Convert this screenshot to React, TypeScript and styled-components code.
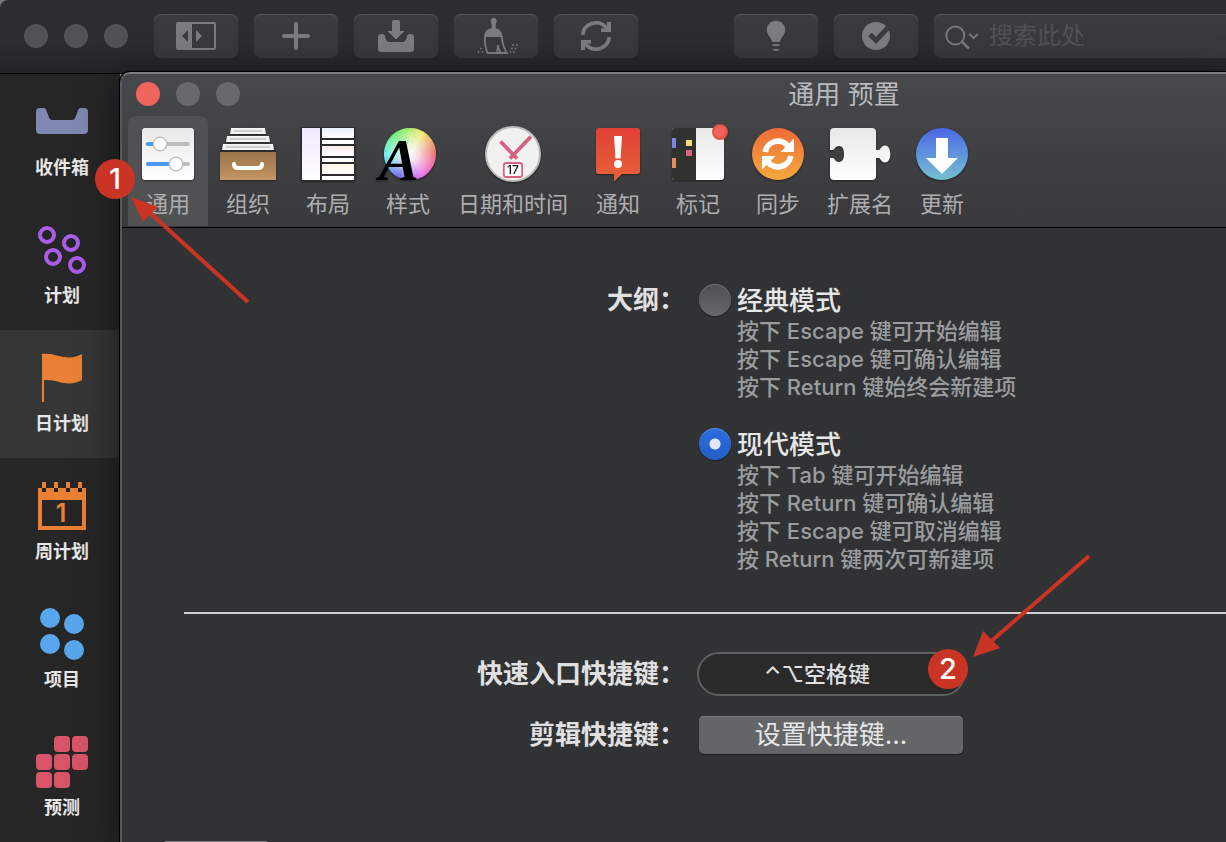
import React from "react";
import styled, { createGlobalStyle, css } from "styled-components";

const GlobalStyle = createGlobalStyle`
  * { box-sizing: border-box; }
  html, body { margin: 0; background: #262626; }
  body, button, input {
    font-family: Inter, "Noto Sans CJK SC", sans-serif;
  }
  button { border: 0; padding: 0; background: none; color: inherit; }
`;

const Page = styled.div`
  position: relative;
  display: flex;
  flex-direction: column;
  height: 100vh;
  overflow: hidden;
  background: #77787a;
`;

/* ---------- main window toolbar ---------- */

const Toolbar = styled.header`
  display: flex;
  align-items: center;
  flex: none;
  height: 74px;
  padding: 0 0 2px 24px;
  gap: 16px;
  background: linear-gradient(#2d2e32 0, #2c2d31 40px, #232427 73px);
  border-bottom: 1px solid #000;
  border-top-left-radius: 8px;
`;

const Lights = styled.div`
  display: flex;
  flex: none;
  gap: 16px;
`;

const Light = styled.button<{ $color: string }>`
  width: 24px;
  height: 24px;
  border-radius: 50%;
  background: ${(p) => p.$color};
`;

const ButtonGroup = styled.div<{ $before: number }>`
  display: flex;
  flex: none;
  gap: 16px;
  margin-left: ${(p) => p.$before}px;
`;

const raised = css`
  background: linear-gradient(#3a3b3e, #37383a);
  box-shadow: inset 0 1px 0 #55565a;
`;

const ToolButton = styled.button`
  ${raised}
  width: 84px;
  height: 44px;
  border-radius: 7px;
  color: #7c7c7e;
  svg { display: block; }
`;

const SearchBox = styled.label`
  ${raised}
  display: flex;
  flex: 1;
  min-width: 0;
  height: 44px;
  border-radius: 7px 0 0 7px;
  color: #77787a;
  svg { flex: none; }
`;

const SearchInput = styled.input`
  flex: 1;
  min-width: 0;
  border: 0;
  padding: 0;
  outline: 0;
  background: transparent;
  color: #9a9a9c;
  font-size: 24px;
  &::placeholder { color: #515156; opacity: 1; }
`;

/* ---------- body ---------- */

const Body = styled.div`
  display: flex;
  flex: 1;
  min-height: 0;
`;

const Sidebar = styled.nav`
  flex: none;
  width: 120px;
  background: #262626;
`;

const SideItem = styled.a<{ $active?: boolean }>`
  display: flex;
  flex-direction: column;
  align-items: center;
  height: 128px;
  padding: 20px 0 0 4px;
  background: ${(p) => (p.$active ? "#363636" : "transparent")};
  color: #e6e6e6;
  font-size: 18px;
  font-weight: 700;
  line-height: 28px;
  text-decoration: none;
  svg { flex: none; }
`;

const Preferences = styled.section`
  position: relative;
  flex: 1;
  min-width: 0;
  margin-top: -2px;
  border-top: 2px solid #7c7d7f;
  border-left: 2px solid #58595b;
  border-top-left-radius: 10px;
  background: #313234;
  box-shadow: 0 0 0 1px #000, 0 10px 40px rgba(0, 0, 0, 0.55);
`;

const PrefHeader = styled.div`
  height: 154px;
  background: linear-gradient(#47484b, #39393b);
  border-bottom: 1px solid #000;
  border-top-left-radius: 8px;
`;

const TitleBar = styled.div`
  display: flex;
  align-items: center;
  height: 42px;
  padding: 0 0 2px 14px;
`;

const Title = styled.h1`
  flex: 1;
  margin: 0;
  padding: 2px 0 0 222px;
  color: #b9babd;
  font-size: 26px;
  font-weight: 400;
  line-height: 36px;
  text-align: center;
`;

const Tabs = styled.div`
  display: flex;
  padding-left: 6px;
`;

const Tab = styled.button<{ $width: number; $active?: boolean }>`
  display: flex;
  flex: none;
  flex-direction: column;
  align-items: center;
  width: ${(p) => p.$width}px;
  height: 110px;
  padding-top: 8px;
  border-radius: 8px 8px 0 0;
  background: ${(p) => (p.$active ? "#505153" : "transparent")};
  color: #adaeb0;
  font-size: 22px;
  line-height: 32px;
  white-space: nowrap;
  svg {
    flex: none;
    overflow: visible;
    margin-bottom: 4px;
    filter: drop-shadow(0 1px 1px rgba(0, 0, 0, 0.45));
  }
`;

/* ---------- preference form ---------- */

const Form = styled.form`
  padding-top: 54px;
`;

const Row = styled.div<{ $gap: number }>`
  display: grid;
  grid-template-columns: 563px 1fr;
  column-gap: 12px;
  margin-bottom: ${(p) => p.$gap}px;
`;

const RowLabel = styled.label<{ $height: number }>`
  color: #e0e0e0;
  font-size: 26px;
  font-weight: 700;
  line-height: ${(p) => p.$height}px;
  text-align: right;
`;

const Option = styled.div`
  display: grid;
  grid-template-columns: 32px 1fr;
  column-gap: 6px;
  margin: 2px 0 27px 2px;
`;

const Radio = styled.input`
  appearance: none;
  width: 32px;
  height: 32px;
  margin: 0;
  border-radius: 50%;
  background: linear-gradient(#4e4f50, #68696a);
  box-shadow: inset 0 1px 0 #707172, 0 1px 1px rgba(0, 0, 0, 0.4);
  &:checked {
    background: radial-gradient(circle, #dfe9fa 5px, transparent 6px),
      linear-gradient(#2c6ddf, #265dc6);
    box-shadow: inset 0 1px 0 #5d8fe6, 0 1px 1px rgba(0, 0, 0, 0.4);
  }
`;

const OptionName = styled.label`
  color: #e6e6e6;
  font-size: 26px;
  font-weight: 500;
  line-height: 33px;
`;

const Hints = styled.p`
  grid-column: 2;
  margin: 0;
  color: #9b9c9d;
  font-size: 22px;
  font-weight: 500;
  line-height: 28px;
`;

const Divider = styled.hr`
  height: 2px;
  margin: 0 0 38px 62px;
  border: 0;
  background: #d0d1d0;
`;

const ShortcutField = styled.input`
  width: 268px;
  height: 44px;
  padding: 0 28px 4px 0;
  border: 2px solid #5e5f60;
  border-radius: 22px;
  outline: 0;
  background: #2a2a2a;
  color: #e0e0e0;
  font-family: Inter, "Noto Sans CJK SC", "DejaVu Sans", sans-serif;
  font-size: 22px;
  font-weight: 500;
  text-align: center;
`;

const PushButton = styled.button`
  width: 264px;
  height: 38px;
  margin-left: 2px;
  border-radius: 5px;
  background: #646567;
  box-shadow: inset 0 1px 0 #7d7e80, 0 1px 1px rgba(0, 0, 0, 0.5);
  color: #e6e6e6;
  font-size: 26px;
  line-height: 36px;
`;

const FooterButton = styled(PushButton)`
  width: 108px;
  margin: 87px 0 0 40px;
`;

/* ---------- annotations lying over the windows ---------- */

const Badge = styled.span<{ $x: number; $y: number }>`
  position: absolute;
  left: ${(p) => p.$x}px;
  top: ${(p) => p.$y}px;
  width: 40px;
  height: 40px;
  border-radius: 50%;
  background: #ca3424;
  color: #fff;
  font-family: Inter, sans-serif;
  font-size: 29px;
  font-weight: 500;
  line-height: 40px;
  text-align: center;
`;

const ArrowLayer = styled.svg`
  position: absolute;
  left: 0;
  top: 0;
  pointer-events: none;
`;

/* ---------- toolbar icons ---------- */

const ToolSvg = ({ children }: { children: React.ReactNode }) => (
  <svg width="84" height="44" viewBox="0 0 84 44" fill="none" aria-hidden="true">
    {children}
  </svg>
);

const SidebarIcon = () => (
  <ToolSvg>
    <rect x="23" y="9" width="38" height="26" rx="1" stroke="currentColor" strokeWidth="2" />
    <path d="M23 9h15v26H23z" fill="currentColor" />
    <path d="M28 22l6-6v12z" fill="#3a3b3d" />
    <path d="M48 22l-6-6v12z" fill="currentColor" />
  </ToolSvg>
);

const PlusIcon = () => (
  <ToolSvg>
    <path d="M30 22h24M42 10v24" stroke="currentColor" strokeWidth="4" strokeLinecap="round" />
  </ToolSvg>
);

const DownloadIcon = () => (
  <ToolSvg>
    <path
      d="M24 23q0-3 3-3h2q1.500 0 2 2l1 3.500q.8 2.500 3.500 2.500h13q2.700 0 3.500-2.500l1-3.500q.5-2 2-2h2q3 0 3 3v12q0 3-3 3H27q-3 0-3-3z"
      fill="currentColor"
    />
    <path d="M38 8q0-2 2-2h4q2 0 2 2v9h4.500L42 25.500 33.500 17H38z" fill="currentColor" />
  </ToolSvg>
);

const BroomIcon = () => (
  <ToolSvg>
    <path d="M36.700 7a3 3 0 0 1 6 0l-1 4v4h-4v-4z" fill="currentColor" />
    <path d="M30 23c0-5 3.500-9 9.500-9s9 4 9 9z" fill="currentColor" />
    <path
      d="M30.800 23c0 6 .5 11 2.700 16H53c-3-4-4.500-9-5.200-16M44 31l-1 8M44 31c.4 3 1.200 6 3 8"
      stroke="currentColor"
      strokeWidth="1.800"
    />
    <g fill="currentColor">
      {[[24.500, 38], [28.500, 38], [27, 34.500], [56.500, 38], [60, 38], [58, 34.500], [59, 31], [63, 31], [61.500, 34.500]].map(
        ([x, y]) => <circle key={`${x}-${y}`} cx={x} cy={y} r="0.900" />
      )}
    </g>
  </ToolSvg>
);

const RefreshIcon = () => (
  <ToolSvg>
    {[0, 180].map((angle) => (
      <g key={angle} transform={`rotate(${angle} 42 22)`}>
        <path d="M28.700 21A13.300 13.300 0 0 1 52 13.500" stroke="currentColor" strokeWidth="3.600" />
        <path d="M53 8h4v10H47v-3.500h3l3-2z" fill="currentColor" />
      </g>
    ))}
  </ToolSvg>
);

const BulbIcon = () => (
  <ToolSvg>
    <path
      d="M42 6.700c-5.200 0-9.200 4-9.200 9.100 0 4.200 2.400 6 4 8.700.9 1.500.7 3.500 2.200 3.500h6c1.500 0 1.300-2 2.200-3.500 1.600-2.700 4-4.500 4-8.700 0-5.100-4-9.100-9.200-9.100z"
      fill="currentColor"
    />
    <path d="M38.500 35h7q-1 2-3.500 2t-3.500-2" fill="currentColor" />
    <path d="M38.500 31h7" stroke="currentColor" strokeWidth="1.800" />
  </ToolSvg>
);

const CheckIcon = () => (
  <ToolSvg>
    <circle cx="42" cy="22" r="14" fill="currentColor" />
    <path d="M36 20.500l6 6L58 9.500" stroke="#3a3b3d" strokeWidth="5" />
  </ToolSvg>
);

const SearchIcon = () => (
  <svg width="55" height="44" viewBox="0 0 55 44" fill="none" stroke="currentColor" aria-hidden="true">
    <circle cx="21.300" cy="21.500" r="9" strokeWidth="2" />
    <path d="M28 28l7 6.500" strokeWidth="2.400" />
    <path d="M35.300 20l4.300 4 4.400-4" strokeWidth="2" />
  </svg>
);

/* ---------- sidebar and tab icons share a 60px canvas ---------- */

const Icon60 = ({ children }: { children: React.ReactNode }) => (
  <svg width="60" height="60" viewBox="0 0 60 60" fill="none" aria-hidden="true">
    {children}
  </svg>
);

const InboxIcon = () => (
  <Icon60>
    <path
      d="M8 14h4q1.500 0 2 1.500l3 8q1 2.500 3 2.500h20q2.500 0 3.300-2.500l3-8q.5-1.500 2-1.500H52q4 0 4 4v18q0 4-4 4H8q-4 0-4-4V18q0-4 4-4z"
      fill="#7f87b2"
    />
  </Icon60>
);

const PlanIcon = () => (
  <Icon60>
    <g stroke="#ab5ceb" strokeWidth="4">
      <circle cx="15" cy="13" r="7" />
      <circle cx="39" cy="21" r="7" />
      <circle cx="21" cy="35" r="7" />
      <circle cx="45" cy="43" r="7" />
    </g>
  </Icon60>
);

const FlagIcon = () => (
  <Icon60>
    <path d="M10 4c10-1.500 18 3.500 27 3.500 5 0 9-1.500 13-3.500v26c-4 2-8 3.500-13 3.500-8 0-16-4.500-25-3.300V52h-2z" fill="#e98033" />
  </Icon60>
);

const CalendarIcon = () => (
  <Icon60>
    <path d="M6 10h48v42H6zM10 22v26h40V22z" fill="#e98033" fillRule="evenodd" />
    {[10, 22, 34, 46].map((x) => (
      <g key={x}>
        <path d={`M${x} 4h4v6h-4z`} fill="#e98033" />
        <path d={`M${x} 10h4v4h-4z`} fill="#242424" />
      </g>
    ))}
    <text x="29" y="44" textAnchor="middle" fontFamily="Inter" fontSize="25" fontWeight="600" fill="#e98033">
      1
    </text>
  </Icon60>
);

const ProjectsIcon = () => (
  <Icon60>
    <g fill="#58a7ee">
      <circle cx="18" cy="12" r="10" />
      <circle cx="42" cy="18" r="10" />
      <circle cx="18" cy="38" r="10" />
      <circle cx="42" cy="44" r="10" />
    </g>
  </Icon60>
);

const ForecastIcon = () => (
  <Icon60>
    {[[22, 2], [40, 2], [4, 20], [22, 20], [40, 20], [4, 38], [22, 38]].map(([x, y]) => (
      <rect key={`${x}-${y}`} x={x} y={y} width="16" height="16" rx="4" fill="#d85468" />
    ))}
  </Icon60>
);

const Gradient = ({ id, from, to }: { id: string; from: string; to: string }) => (
  <linearGradient id={id} x1="0" y1="0" x2="0" y2="1">
    <stop offset="0" stopColor={from} />
    <stop offset="1" stopColor={to} />
  </linearGradient>
);

const GeneralIcon = () => (
  <Icon60>
    <Gradient id="paper" from="#e8e8e8" to="#ffffff" />
    <rect x="4" y="4" width="52" height="52" rx="3" fill="url(#paper)" />
    <g strokeWidth="4" strokeLinecap="round">
      <path d="M10 20h40M10 40h40" stroke="#bdbdbd" />
      <path d="M10 20h12M10 40h28" stroke="#4c98f3" />
    </g>
    <g fill="#fff" stroke="#bcbcbc" strokeWidth="1.200">
      <circle cx="22" cy="20" r="6.800" />
      <circle cx="38" cy="40" r="6.800" />
    </g>
  </Icon60>
);

const OrganizeIcon = () => (
  <Icon60>
    <Gradient id="drawer" from="#9a744b" to="#c49663" />
    <path d="M13 4h34l1 6H12zM9 12h42l1 6H8zM5 20h50l1 6H4z" fill="#f2f2f2" />
    <path d="M16 7h28M12 15h36M8 23h44" stroke="#cfcfcf" strokeWidth="2" />
    <path d="M2 26h56v2H2z" fill="#2b2b2c" />
    <path d="M2 28h56v28H2z" fill="url(#drawer)" />
    <path d="M16 40q0 4 4 4h20q4 0 4-4" stroke="#fff" strokeWidth="4" strokeLinecap="round" />
  </Icon60>
);

const LayoutIcon = () => (
  <Icon60>
    <Gradient id="lilac" from="#f1e9fd" to="#ffffff" />
    <Gradient id="blue" from="#e9effc" to="#ffffff" />
    <Gradient id="rose" from="#fbeaea" to="#ffffff" />
    <Gradient id="sand" from="#fcf8e4" to="#ffffff" />
    <path d="M3 3h54v54H3z" fill="#2b2b2d" />
    <path d="M4 4h18v52H4z" fill="url(#lilac)" />
    <path d="M24 4h32v10H24z" fill="url(#blue)" />
    <path d="M24 22h32v10H24z" fill="url(#rose)" />
    <path d="M24 40h32v10H24z" fill="url(#sand)" />
    <path d="M24 16h32v4H24zM24 34h32v4H24zM24 52h32v4H24z" fill="#fff" />
  </Icon60>
);

const wheelSlices = Array.from({ length: 60 }, (_, i) => {
  const point = (deg: number) => {
    const rad = (deg * Math.PI) / 180;
    return `${(32 + 26 * Math.cos(rad)).toFixed(2)} ${(30 - 26 * Math.sin(rad)).toFixed(2)}`;
  };
  const start = i * 6;
  return { hue: start, d: `M32 30L${point(start - 0.5)}A26 26 0 0 0 ${point(start + 6.5)}z` };
});

const StyleIcon = () => (
  <Icon60>
    <radialGradient id="wheel">
      <stop offset="0" stopColor="#fff" />
      <stop offset="0.3" stopColor="#fff" stopOpacity="0.8" />
      <stop offset="1" stopColor="#fff" stopOpacity="0" />
    </radialGradient>
    {wheelSlices.map((s) => (
      <path key={s.hue} d={s.d} fill={`hsl(${s.hue} 80% 68%)`} />
    ))}
    <circle cx="32" cy="30" r="26" fill="url(#wheel)" />
    <text x="1" y="56" fontFamily="Liberation Serif" fontSize="60" fontWeight="700" fontStyle="italic" fill="#000">
      A
    </text>
  </Icon60>
);

const DateIcon = () => (
  <Icon60>
    <circle cx="30" cy="30" r="27" fill="#f1f1f0" stroke="#bcbcba" strokeWidth="2" />
    <path d="M17.500 17.500L34 34.500M48 12.500L27 34.500" stroke="#d5627f" strokeWidth="3.800" />
    <rect x="20.800" y="39" width="18.400" height="14" rx="2.500" fill="#fff" stroke="#d5627f" strokeWidth="1.800" />
    <text x="30" y="50" textAnchor="middle" fontFamily="Inter" fontSize="12" fontWeight="500" fill="#111">
      17
    </text>
  </Icon60>
);

const NoticeIcon = () => (
  <Icon60>
    <Gradient id="notice" from="#e04036" to="#e86238" />
    <path d="M11 4h38q3 0 3 3v40q0 3-3 3H34l-8 7.500V50H11q-3 0-3-3V7q0-3 3-3z" fill="url(#notice)" />
    <path d="M26 12h8l-1.500 22.500h-5z" fill="#fff" />
    <circle cx="30" cy="40" r="4" fill="#fff" />
  </Icon60>
);

const BadgesIcon = () => (
  <Icon60>
    <rect x="4" y="4" width="52" height="52" rx="3" fill="url(#paper)" />
    <path d="M7 4h21v52H7q-3 0-3-3V7q0-3 3-3z" fill="#30322f" />
    <path d="M4 14h4v10H4z" fill="#7c86e6" />
    <path d="M4 34h4v10H4z" fill="#ea8c58" />
    <path d="M18 16h6v6h-6z" fill="#f6d979" />
    <path d="M18 26h6v6h-6z" fill="#dc6480" />
    <circle cx="52" cy="8" r="7" fill="#ef655b" stroke="#e2503f" strokeWidth="2" />
  </Icon60>
);

const SyncIcon = () => (
  <Icon60>
    <Gradient id="sync" from="#ef6d36" to="#f3a940" />
    <circle cx="30" cy="30" r="26" fill="url(#sync)" />
    {[0, 180].map((angle) => (
      <g key={angle} transform={`rotate(${angle} 30 30)`}>
        <path d="M17.200 28A13 13 0 0 1 40.500 22.500" stroke="#fff" strokeWidth="5.600" />
        <path d="M46 14.500V28H32.500z" fill="#fff" />
      </g>
    ))}
  </Icon60>
);

const ExtensionIcon = () => (
  <Icon60>
    <path
      d="M4 4h38q4 0 4 4v18h3c1.500 0 2-4.500 6-4.500s5.300 4.500 5.300 8.500-1.300 8.500-5.300 8.500-4.500-4.500-6-4.500h-3v18q0 4-4 4H4q-4 0-4-4V34h3c1.500 0 2 4 6 4s5-4 5-8-1-8-5-8-4.500 4-6 4H0V8q0-4 4-4z"
      fill="url(#paper)"
    />
  </Icon60>
);

const UpdateIcon = () => (
  <Icon60>
    <Gradient id="update" from="#4c66e6" to="#74c1d1" />
    <circle cx="30" cy="30" r="26" fill="url(#update)" />
    <path d="M24 14h12v20h10L30 50 14 34h10z" fill="#fff" />
  </Icon60>
);

/* ---------- data ---------- */

const leftTools = [
  { name: "边栏", Icon: SidebarIcon },
  { name: "新建", Icon: PlusIcon },
  { name: "收集", Icon: DownloadIcon },
  { name: "清理", Icon: BroomIcon },
  { name: "同步", Icon: RefreshIcon },
];

const rightTools = [
  { name: "聚焦", Icon: BulbIcon },
  { name: "检查", Icon: CheckIcon },
];

const perspectives = [
  { name: "收件箱", Icon: InboxIcon },
  { name: "计划", Icon: PlanIcon },
  { name: "日计划", Icon: FlagIcon, active: true },
  { name: "周计划", Icon: CalendarIcon },
  { name: "项目", Icon: ProjectsIcon },
  { name: "预测", Icon: ForecastIcon },
];

const tabs = [
  { name: "通用", Icon: GeneralIcon, width: 80, active: true },
  { name: "组织", Icon: OrganizeIcon, width: 80 },
  { name: "布局", Icon: LayoutIcon, width: 80 },
  { name: "样式", Icon: StyleIcon, width: 80 },
  { name: "日期和时间", Icon: DateIcon, width: 130 },
  { name: "通知", Icon: NoticeIcon, width: 80 },
  { name: "标记", Icon: BadgesIcon, width: 80 },
  { name: "同步", Icon: SyncIcon, width: 80 },
  { name: "扩展名", Icon: ExtensionIcon, width: 84 },
  { name: "更新", Icon: UpdateIcon, width: 80 },
];

const modes = [
  {
    id: "classic",
    name: "经典模式",
    hints: ["按下 Escape 键可开始编辑", "按下 Escape 键可确认编辑", "按下 Return 键始终会新建项"],
  },
  {
    id: "modern",
    name: "现代模式",
    hints: ["按下 Tab 键可开始编辑", "按下 Return 键可确认编辑", "按下 Escape 键可取消编辑", "按 Return 键两次可新建项"],
  },
];

export default function App() {
  return (
    <Page>
      <GlobalStyle />
      <Toolbar>
        <Lights>
          {["关闭", "最小化", "缩放"].map((name) => (
            <Light key={name} aria-label={name} $color="#515254" />
          ))}
        </Lights>
        <ButtonGroup $before={10}>
          {leftTools.map(({ name, Icon }) => (
            <ToolButton key={name} aria-label={name}><Icon /></ToolButton>
          ))}
        </ButtonGroup>
        <ButtonGroup $before={80}>
          {rightTools.map(({ name, Icon }) => (
            <ToolButton key={name} aria-label={name}><Icon /></ToolButton>
          ))}
        </ButtonGroup>
        <SearchBox>
          <SearchIcon />
          <SearchInput aria-label="搜索" placeholder="搜索此处" />
        </SearchBox>
      </Toolbar>

      <Body>
        <Sidebar>
          {perspectives.map(({ name, Icon, active }) => (
            <SideItem key={name} href="#" $active={active}>
              <Icon />
              {name}
            </SideItem>
          ))}
        </Sidebar>

        <Preferences>
          <PrefHeader>
            <TitleBar>
              <Lights>
                <Light aria-label="关闭" $color="#ef655b" />
                <Light aria-label="最小化" $color="#68696b" />
                <Light aria-label="缩放" $color="#68696b" />
              </Lights>
              <Title>通用 预置</Title>
            </TitleBar>
            <Tabs>
              {tabs.map(({ name, Icon, width, active }) => (
                <Tab key={name} $width={width} $active={active}>
                  <Icon />
                  {name}
                </Tab>
              ))}
            </Tabs>
          </PrefHeader>

          <Form onSubmit={(e) => e.preventDefault()}>
            <Row $gap={12}>
              <RowLabel as="span" $height={36}>大纲：</RowLabel>
              <div role="radiogroup" aria-label="大纲">
                {modes.map((mode) => (
                  <Option key={mode.id}>
                    <Radio type="radio" name="mode" id={mode.id} defaultChecked={mode.id === "modern"} />
                    <OptionName htmlFor={mode.id}>{mode.name}</OptionName>
                    <Hints>
                      {mode.hints.map((hint) => (
                        <React.Fragment key={hint}>{hint}<br /></React.Fragment>
                      ))}
                    </Hints>
                  </Option>
                ))}
              </div>
            </Row>
            <Divider />
            <Row $gap={20}>
              <RowLabel htmlFor="entry" $height={44}>快速入口快捷键：</RowLabel>
              <ShortcutField id="entry" readOnly value="⌃⌥空格键" />
            </Row>
            <Row $gap={0}>
              <RowLabel htmlFor="clip" $height={38}>剪辑快捷键：</RowLabel>
              <PushButton id="clip" type="button">设置快捷键...</PushButton>
            </Row>
            <FooterButton type="button" aria-label="还原" />
          </Form>
        </Preferences>
      </Body>

      <ArrowLayer width="1226" height="842" viewBox="0 0 1226 842" aria-hidden="true">
        <g stroke="#ca3424" strokeWidth="4">
          <path d="M248 302L148 211" />
          <path d="M1089 556L988 644" />
        </g>
        <path d="M131 197l27 10-15 15z" fill="#ca3424" />
        <path d="M973 657l10-26 17 17z" fill="#ca3424" />
      </ArrowLayer>
      <Badge $x={95} $y={159}>1</Badge>
      <Badge $x={928} $y={649}>2</Badge>
    </Page>
  );
}
